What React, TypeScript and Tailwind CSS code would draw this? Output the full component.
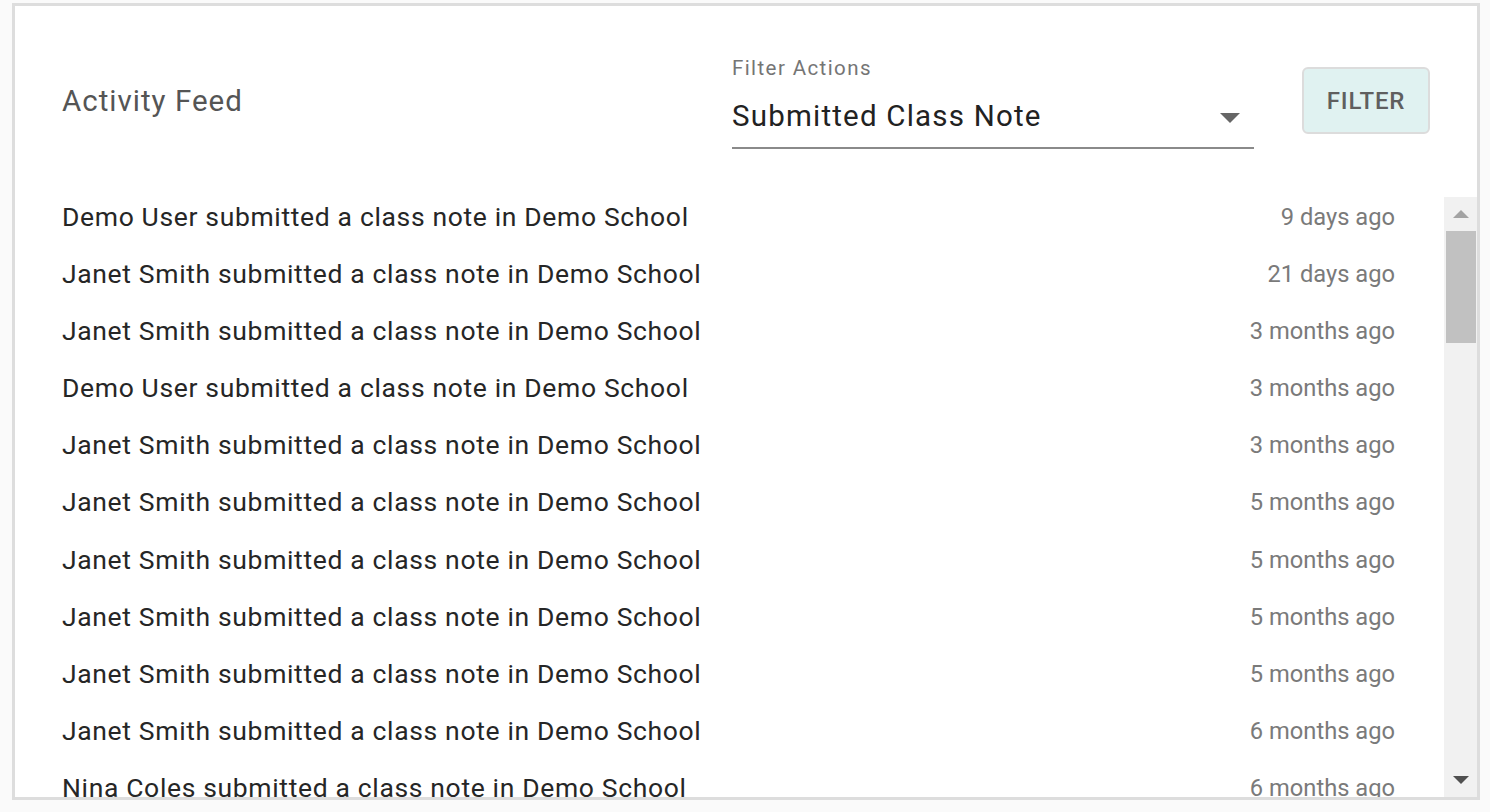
import React from "react";

const rows: [string, string][] = [
  ["Demo User submitted a class note in Demo School", "9 days ago"],
  ["Janet Smith submitted a class note in Demo School", "21 days ago"],
  ["Janet Smith submitted a class note in Demo School", "3 months ago"],
  ["Demo User submitted a class note in Demo School", "3 months ago"],
  ["Janet Smith submitted a class note in Demo School", "3 months ago"],
  ["Janet Smith submitted a class note in Demo School", "5 months ago"],
  ["Janet Smith submitted a class note in Demo School", "5 months ago"],
  ["Janet Smith submitted a class note in Demo School", "5 months ago"],
  ["Janet Smith submitted a class note in Demo School", "5 months ago"],
  ["Janet Smith submitted a class note in Demo School", "6 months ago"],
  ["Nina Coles submitted a class note in Demo School", "6 months ago"],
];

export default function App() {
  return (
    <div
      className="w-[1490px] h-[812px] bg-[#fafafa] overflow-hidden pl-[12px] pt-[3px]"
      style={{ fontFamily: "Roboto, 'Noto Sans', sans-serif" }}
    >
      <div className="w-[1468px] h-[797px] bg-white border-[3px] border-[#dddddd] flex flex-col">
        {/* Header */}
        <div className="h-[191px] shrink-0 flex items-start pl-[47px] pr-[47px]">
          <div className="mt-[77px] text-[29.5px] leading-[36px] tracking-[1px] text-[#555555] whitespace-nowrap">
            Activity Feed
          </div>
          <div className="flex-1" />
          <div className="mt-[50px] w-[522px] border-b-2 border-[#8a8a8a] pb-[13px]">
            <div className="text-[20.5px] leading-[24px] tracking-[1.4px] text-[#757575]">Filter Actions</div>
            <div className="mt-[18px] h-[36px] flex items-center justify-between pr-[14px]">
              <span className="text-[29.5px] leading-[36px] tracking-[1.2px] text-[#222222] whitespace-nowrap">
                Submitted Class Note
              </span>
              <svg width="20" height="10" viewBox="0 0 20 10" className="mt-[4px]">
                <polygon points="0,0 20,0 10,10" fill="#666666" />
              </svg>
            </div>
          </div>
          <div className="ml-[48px] mt-[61px] w-[128px] h-[67px] rounded-[6px] border-2 border-[#dcdcdc] bg-[#e0f2f1] flex items-center justify-center text-[24px] font-medium text-[#5f5f5f] tracking-[0.9px]">
            FILTER
          </div>
        </div>
        {/* List */}
        <div className="flex-1 flex overflow-hidden">
          <div className="flex-1 overflow-hidden pl-[47px] pr-[49px]">
            {rows.map(([t, d], i) => (
              <div key={i} className="h-[57.1px] pt-[4px] flex justify-between">
                <span className="text-[26.5px] leading-[32px] tracking-[0.65px] text-[#262626] whitespace-nowrap">
                  {t}
                </span>
                <span className="text-[23.7px] leading-[32px] text-[#7a7a7a] whitespace-nowrap">{d}</span>
              </div>
            ))}
          </div>
          <div className="w-[33px] shrink-0 bg-[#f1f1f1] flex flex-col items-center">
            <div className="h-[34px] w-full flex items-center justify-center">
              <svg width="16" height="8" viewBox="0 0 16 8">
                <polygon points="8,0 16,8 0,8" fill="#a3a3a3" />
              </svg>
            </div>
            <div className="w-[30px] h-[112px] bg-[#c1c1c1]" />
            <div className="flex-1" />
            <div className="h-[34px] w-full flex items-center justify-center">
              <svg width="16" height="8" viewBox="0 0 16 8">
                <polygon points="0,0 16,0 8,8" fill="#505050" />
              </svg>
            </div>
          </div>
        </div>
      </div>
    </div>
  );
}
